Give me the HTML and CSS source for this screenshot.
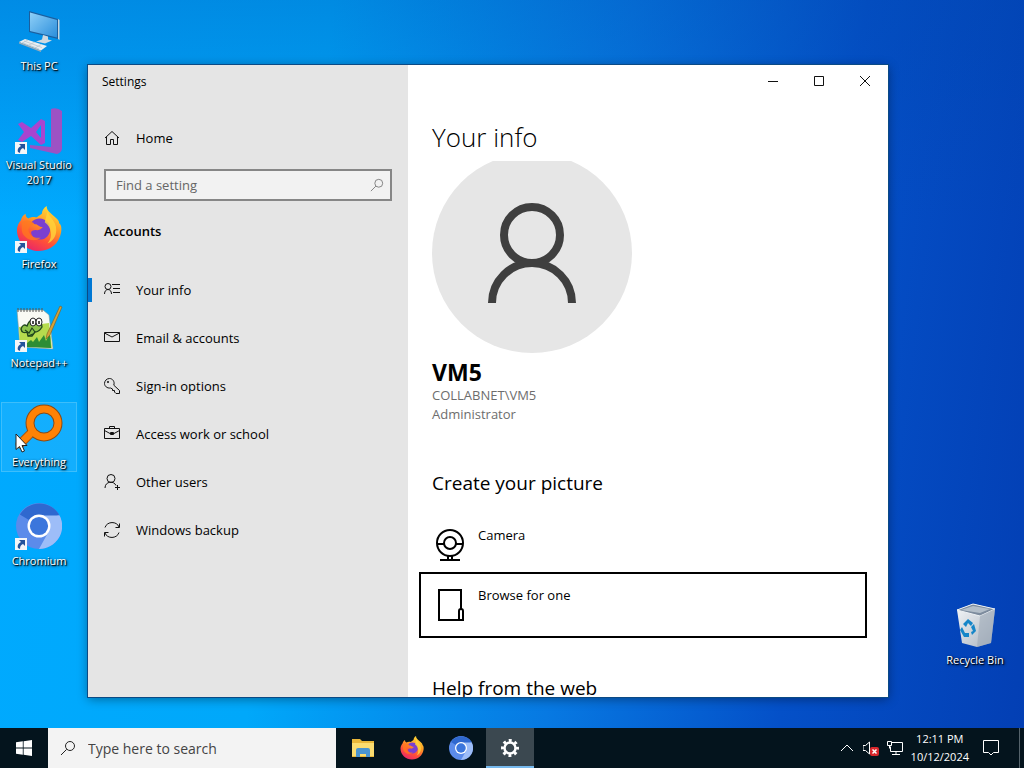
FILE: index.html
```html
<!DOCTYPE html>
<html lang="en">
<head>
	<meta charset="UTF-8" />
	<title>Settings</title>
	<link rel="stylesheet" href="styles.css">
</head>
<body>
	<!--shared shapes-->
	<svg class="defs" width="0" height="0">
		<defs>
			<linearGradient id="fox" x1="0.8" y1="0" x2="0.3" y2="1">
				<stop offset="0" stop-color="#ffe43a"/>
				<stop offset="0.4" stop-color="#ff9a25"/>
				<stop offset="0.7" stop-color="#ff5038"/>
				<stop offset="1" stop-color="#e8256a"/>
			</linearGradient>
			<linearGradient id="screen" x1="0" y1="0" x2="1" y2="1">
				<stop offset="0" stop-color="#8fd0f8"/>
				<stop offset="1" stop-color="#2b8edb"/>
			</linearGradient>
			<linearGradient id="bin" x1="0" y1="0" x2="1" y2="1">
				<stop offset="0" stop-color="#f4f6f8"/>
				<stop offset="1" stop-color="#a9b3bf"/>
			</linearGradient>
			<symbol id="shortcut" viewBox="0 0 12 12">
				<rect width="12" height="12" fill="#f4f6f8"/>
				<path d="M4 2h6v6L8 6C6 7 5 8 5 11L3 10C2 7 4 5 6 4z" fill="#24539b"/>
			</symbol>
			<symbol id="firefox" viewBox="0 0 48 48">
				<path d="M5 15C6 11 8 9 10 8c0 3 1 4 3 5 2-1 5-2 8-1 0 0 3-2 6-4 0-3 2-6 5-8 0 5 4 7 8 11 3 3 5 4 5 7 2 1 3 5 2 10-2 11-11 19-23 19S1 38 1 25c0-4 2-8 4-10z" fill="url(#fox)"/>
				<path d="M16 17c4-5 13-6 18 1 3 5 2 12-3 15-5 4-13 2-15-4-1-3 2-4 5-4 3 1 5-1 7-3-4 0-5-3-8-3-1 0-3-1-4-2z" fill="#7a3fd0"/>
				<path d="M33 5c1 7 9 10 9 20 0 7-4 12-9 14 6-7 4-17-3-22z" fill="#ffd43b" opacity="0.8"/>
				<path d="M6 17c4-3 8-3 13 1-2 3-6 3-6 7 1 7 8 9 13 8-8 6-19 1-20-8z" fill="#ff7a1f" opacity="0.75"/>
			</symbol>
			<symbol id="chromium" viewBox="0 0 48 48">
				<circle cx="24" cy="24" r="24" fill="#5b8bea"/>
				<path d="M24 24L4 12A24 24 0 0 1 45 12z" fill="#2f68cf"/>
				<path d="M24 13h21.500A24 24 0 0 1 24 48L34 30z" fill="#9dbdf8"/>
				<circle cx="24" cy="24" r="12" fill="#fff"/>
				<circle cx="24" cy="24" r="9.500" fill="#3b76dc"/>
			</symbol>
			<symbol id="search" viewBox="0 0 16 16">
				<circle cx="10" cy="6" r="4.500" fill="none" stroke="currentColor"/>
				<path d="M6.700 9.300L1 15" fill="none" stroke="currentColor"/>
			</symbol>
		</defs>
	</svg>

	<main class="desktop">
		<ul class="shortcuts">
			<li class="shortcut">
				<svg viewBox="0 0 48 48">
					<path d="M14 3l29 8v20l-29-7z" fill="#1b5f9e"/>
					<path d="M15 4.500l27 7.500v17.500L15 23z" fill="url(#screen)"/>
					<path d="M43 11l1.500 1v20L43 31z" fill="#c5d6e0"/>
					<path d="M28 27l5 1.500v3l4 1-7 3-9-2 6-2z" fill="#cfd9e0"/>
					<path d="M4 34l6-3 22 7-6 4.500z" fill="#e9eef1"/>
					<path d="M4 34l22 8.500v1.500L4 35.500z" fill="#9aabb7"/>
					<path d="M9 33l18 6.500M7 34.500L24 41M13 32l-5 2.500M20 34l-6 3M26 36.500L20 40" stroke="#b5c2cb" stroke-width="0.700"/>
				</svg>
				<span>This PC</span>
			</li>
			<li class="shortcut">
				<svg viewBox="0 0 48 48">
					<path d="M36 2q6-2 11 2v38q-1 4-5 5L15 41v-3l21 2z" fill="#9c52c4"/>
					<path d="M3 17l4-2 9 6 10-9 4 2v22l-4 2-10-9-9 6-4-2 6-8zM26 18l-5 7 5 6z" fill="#a845cf" fill-rule="evenodd"/>
					<use href="#shortcut" x="0" y="35" width="12" height="12"/>
				</svg>
				<span>Visual Studio 2017</span>
			</li>
			<li class="shortcut">
				<svg viewBox="0 0 48 48">
					<use href="#firefox" x="1" y="0" width="46" height="46"/>
					<use href="#shortcut" x="0" y="35" width="12" height="12"/>
				</svg>
				<span>Firefox</span>
			</li>
			<li class="shortcut">
				<svg viewBox="0 0 48 48">
					<path d="M2 5h26l6 5 4 34-33-2z" fill="#f9faf4" stroke="#8a9a90" stroke-width="0.600"/>
					<path d="M3 3v4M6 3v4M9 3v4M12 3v4M15 3v4M18 3v4M21 3v4M24 3v4M27 3v4" stroke="#555" stroke-width="1"/>
					<path d="M4 22l30-4 3 25-32-2z" fill="#b6dc4e"/>
					<path d="M12 38l4-3 2 2 4-5 2 5 5-7 2 6 4-8 1 15-25-1z" fill="#2d8d35"/>
					<path d="M6 24q2-6 6-3 3-9 9-4 6-1 6 5-3 5-7 5l-3 4h-4l-1-4q-5 2-6-3z" fill="#8bc34a" stroke="#20451d" stroke-width="1.300"/>
					<path d="M10 25l4 3 3-5 3 4M13 31l5-2" fill="none" stroke="#20451d" stroke-width="1.200"/>
					<ellipse cx="18" cy="17" rx="3" ry="4" fill="#fff" stroke="#222"/>
					<ellipse cx="24" cy="17" rx="3" ry="4" fill="#fff" stroke="#222"/>
					<path d="M18 16v3M24 16v3" stroke="#111" stroke-width="1.500"/>
					<path d="M45 1l2 1-12 28-4 4 1-5z" fill="#d3a23a" stroke="#7a5b20" stroke-width="0.600"/>
					<use href="#shortcut" x="0" y="35" width="12" height="12"/>
				</svg>
				<span>Notepad++</span>
			</li>
			<li class="shortcut selected">
				<svg viewBox="0 0 48 48">
					<path d="M16 29L5 40" stroke="#a95611" stroke-width="9" stroke-linecap="round"/>
					<circle cx="29" cy="19" r="14" fill="none" stroke="#8a4b16" stroke-width="9"/>
					<path d="M17 28L5 40" stroke="#ff8205" stroke-width="7" stroke-linecap="round"/>
					<circle cx="29" cy="19" r="14" fill="none" stroke="#ff8205" stroke-width="7"/>
				</svg>
				<span>Everything</span>
			</li>
			<li class="shortcut">
				<svg viewBox="0 0 48 48">
					<use href="#chromium" x="1" y="0" width="46" height="46"/>
					<use href="#shortcut" x="0" y="35" width="12" height="12"/>
				</svg>
				<span>Chromium</span>
			</li>
		</ul>

		<div class="shortcut recycle">
			<svg viewBox="0 0 48 48">
				<path d="M6 8l16-6 22 5-4 34-14 4-15-4z" fill="url(#bin)"/>
				<path d="M6 8l16-6 22 5-15 7z" fill="#7d8c9e" stroke="#eef2f5"/>
				<path d="M10 8l12-4 17 3-10 4z" fill="#b3bec9"/>
				<path d="M29 14l15-7-4 34-14 4z" fill="#99a6b5" opacity="0.550"/>
				<path d="M12 22l5-5 5 4-2 3-3-3-2 4zM23 22l2 7-4 4-1-3 2-1-2-4zM11 25l3 6h4v4h-5l-4-7z" fill="#1686c8"/>
			</svg>
			<span>Recycle Bin</span>
		</div>

		<section class="window">
			<aside class="sidebar">
				<div class="window-title">Settings</div>
				<a class="nav-item home" href="#home">
					<svg viewBox="0 0 16 16"><path d="M1 8l7-6.500L15 8M2.500 7v7.500h4v-5h3v5h4V7"/></svg>
					Home
				</a>
				<div class="find">
					<input type="text" placeholder="Find a setting" aria-label="Find a setting">
					<svg><use href="#search"/></svg>
				</div>
				<h2 class="group">Accounts</h2>
				<nav>
					<a class="nav-item current" href="#info">
						<svg viewBox="0 0 16 16"><circle cx="4" cy="4.500" r="3"/><path d="M.500 12c0-6 7-6 7 0M8 2.500h8M9 6.500h7M9 10.500h7"/></svg>
						Your info
					</a>
					<a class="nav-item" href="#email">
						<svg viewBox="0 0 16 16"><path d="M.500 2.500h15v9H.500zM.500 3L8 7l7.500-4"/></svg>
						Email &amp; accounts
					</a>
					<a class="nav-item" href="#signin">
						<svg viewBox="0 0 16 16"><path d="M9.800 7.200C11 3.500 8.500.500 5.500.500S.500 3 .500 5.500s2.500 5 6 4.500l2 1v1.500h2V14l1.500 1.500h3.500v-3z"/><circle cx="4" cy="4" r=".700"/></svg>
						Sign-in options
					</a>
					<a class="nav-item" href="#work">
						<svg viewBox="0 0 16 16"><path d="M.500 2.500h15v10H.500zM5.500 2.500v-2h5v2M.500 4.500L6 7.500h4l5.500-3M6.500 6.500h3v2h-3z"/></svg>
						Access work or school
					</a>
					<a class="nav-item" href="#users">
						<svg viewBox="0 0 16 16"><circle cx="7" cy="4.500" r="4"/><path d="M1 14c0-7 9-7.500 11-2.500M13.500 11v5M11 13.500h5"/></svg>
						Other users
					</a>
					<a class="nav-item" href="#backup">
						<svg viewBox="0 0 16 16"><path d="M1 5.500C3-1 13-1 15 5M15.500 1.500V5.500h-4M15 10.500C13 17 3 17 1 11M.500 14.500v-4h4"/></svg>
						Windows backup
					</a>
				</nav>
			</aside>

			<div class="content">
				<div class="controls">
					<button aria-label="Minimize"><svg viewBox="0 0 12 12"><path d="M1 6.500h10"/></svg></button>
					<button aria-label="Maximize"><svg viewBox="0 0 12 12"><path d="M1.500 1.500h9v9h-9z"/></svg></button>
					<button aria-label="Close"><svg viewBox="0 0 12 12"><path d="M1 1l10 10M11 1L1 11"/></svg></button>
				</div>
				<h1>Your info</h1>
				<div class="scroll">
					<svg class="avatar" viewBox="0 0 200 200">
						<circle cx="100" cy="100" r="100" fill="#e6e6e6"/>
						<circle cx="100" cy="82" r="28" fill="none" stroke="#3f3f3f" stroke-width="8"/>
						<path d="M60 150a40 40 0 0 1 80 0" fill="none" stroke="#3f3f3f" stroke-width="8"/>
					</svg>
					<div class="user">VM5</div>
					<div class="detail">COLLABNET\VM5</div>
					<div class="detail">Administrator</div>

					<h2>Create your picture</h2>
					<button class="source">
						<svg viewBox="0 0 32 34"><circle cx="16" cy="16" r="13"/><circle cx="16" cy="16" r="6"/><path d="M3 17h7M22 17h7M14 29v4M18 29v4M6 33h20"/></svg>
						<span>Camera</span>
					</button>
					<button class="source focused">
						<svg viewBox="0 0 32 34"><path d="M24 33H5V3h22v19"/><path d="M25 33v-9q0-2 2-2t2 2v9z"/></svg>
						<span>Browse for one</span>
					</button>
					<h2 class="help">Help from the web</h2>
				</div>
			</div>
		</section>

		<!--mouse pointer-->
		<svg class="pointer" viewBox="0 0 13 20"><path d="M1 1v15.500l3.500-3 2.500 5.500 2.500-1-2.500-5.500h5z" fill="#fff" stroke="#222"/></svg>
	</main>

	<footer class="taskbar">
		<button class="start" aria-label="Start">
			<svg viewBox="0 0 16 16"><path d="M0 2.300l6.800-1v6.300H0zM7.600 1.200L16 0v7.600H7.600zM0 8.400h6.800v6.300L0 13.700zM7.600 8.400H16V16l-8.400-1.200z" fill="#fff"/></svg>
		</button>
		<label class="task-search">
			<svg><use href="#search"/></svg>
			<input type="text" placeholder="Type here to search" aria-label="Search">
		</label>
		<div class="apps">
			<button aria-label="File Explorer">
				<svg viewBox="0 0 24 24"><path d="M1 3h8l2 2h12v16H1z" fill="#e9b73a"/><path d="M1 7h22v13H1z" fill="#fbdc70"/><path d="M5 21v-7q0-2 2-2h10q2 0 2 2v7h-4v-3H9v3z" fill="#4a94d0"/></svg>
			</button>
			<button aria-label="Firefox"><svg><use href="#firefox"/></svg></button>
			<button aria-label="Chromium"><svg><use href="#chromium"/></svg></button>
			<button class="active" aria-label="Settings">
				<svg viewBox="0 0 24 24" fill="none" stroke="#fff">
					<circle cx="12" cy="13" r="5.500" stroke-width="2.500"/>
					<circle cx="12" cy="13" r="7.500" stroke-width="3" stroke-dasharray="2.900 2.990" stroke-dashoffset="1.450"/>
				</svg>
			</button>
		</div>
		<div class="tray">
			<svg viewBox="0 0 16 16"><path d="M2 11l6-6 6 6"/></svg>
			<svg viewBox="0 0 16 16"><path d="M0 5.500h2.500L6.500 2v12L2.500 10.500H0z"/><rect x="7" y="7" width="9" height="9" rx="2" fill="#d8262b" stroke="none"/><path d="M9.500 9.500l4 4M13.500 9.500l-4 4" stroke-width="1.500"/></svg>
			<svg viewBox="0 0 16 16"><path d="M4.500 2.500h11v9h-12v-5M5 14.500h8M9 11.500v3M.500 1.500h4v4h-4zM2.500 5.500v3"/></svg>
			<div class="clock">12:11 PM<br>10/12/2024</div>
			<svg class="notice" viewBox="0 0 18 18"><path d="M1.500 1.500h15v12h-5L9 16l-2.500-2.500h-5z"/></svg>
		</div>
	</footer>
</body>
</html>
```
FILE: styles.css
```css
* {
	box-sizing: border-box;
}
body {
	margin: 0;
	height: 100vh;
	display: flex;
	flex-direction: column;
	overflow: hidden;
	font-family: "Open Sans", "Noto Sans", sans-serif;
	font-size: 13px;
	color: #000;
}
button, input {
	font: inherit;
	color: inherit;
	border: 0;
	background: none;
	padding: 0;
}
h1, h2 {
	margin: 0;
	font-weight: 400;
}
.defs {
	position: absolute;
}

/*desktop*/
.desktop {
	position: relative;
	flex: 1;
	min-height: 0;
	background:
		linear-gradient(180deg, rgba(0,70,170,0.3), rgba(0,70,170,0) 30%),
		linear-gradient(97deg, #00aaff 0%, #00a8fa 30%, #0779e2 57%, #0450c8 78%, #033fb4 100%);
}
.shortcuts {
	list-style: none;
	margin: 0;
	padding: 6px 0 0 1px;
	width: 77px;
	display: grid;
	grid-auto-rows: 99px;
	align-items: start;
}
.shortcut {
	display: flex;
	flex-direction: column;
	align-items: center;
	height: 70px;
	padding-top: 2px;
	font-size: 11px;
	line-height: 15px;
	text-align: center;
	color: #fff;
	text-shadow: 1px 1px 1px #000, 1px 1px 3px #000;
}
.shortcut svg {
	flex: none;
	width: 48px;
	height: 48px;
	margin-bottom: 2px;
}
.selected {
	border: 1px solid #3dbefb;
	background: rgba(120,205,255,0.16);
	padding-top: 1px;
}
.recycle {
	position: absolute;
	right: 11px;
	bottom: 58px;
	width: 76px;
}
.pointer {
	position: absolute;
	left: 15px;
	top: 433px;
	width: 13px;
	height: 20px;
}

/*settings window*/
.window {
	position: absolute;
	top: 65px;
	right: 136px;
	bottom: 31px;
	left: 88px;
	display: flex;
	overflow: hidden;
	background: #fff;
	box-shadow: 0 0 0 1px #0b4a85, 0 2px 10px rgba(0,0,0,0.4);
}
.sidebar {
	width: 320px;
	flex: none;
	background: #e5e5e5;
}
.window-title {
	height: 32px;
	padding-left: 14px;
	font-size: 12px;
	line-height: 34px;
}
.nav-item {
	display: flex;
	align-items: center;
	gap: 16px;
	height: 48px;
	padding-left: 16px;
	color: inherit;
	text-decoration: none;
}
.nav-item svg {
	width: 16px;
	height: 16px;
	fill: none;
	stroke: #111;
}
.home {
	margin-top: 17px;
}
.current {
	background: linear-gradient(#0078d4, #0078d4) left / 4px 24px no-repeat;
}
.find {
	display: flex;
	align-items: center;
	height: 32px;
	margin: 7px 16px 0;
	padding: 0 6px 0 10px;
	border: 2px solid #868686;
	background: #f2f2f2;
}
.find input {
	flex: 1;
	min-width: 0;
}
.find svg {
	width: 14px;
	height: 14px;
	color: #777;
}
input::placeholder {
	color: #666;
	opacity: 1;
}
.group {
	margin: 20px 0 25px;
	padding-left: 16px;
	font-size: 13px;
	line-height: 20px;
	font-weight: 600;
}
.content {
	flex: 1;
	min-width: 0;
	display: flex;
	flex-direction: column;
}
.controls {
	display: flex;
	justify-content: flex-end;
}
.controls button {
	width: 46px;
	height: 32px;
}
.controls svg {
	display: block;
	margin: auto;
	width: 12px;
	height: 12px;
	fill: none;
	stroke: #111;
}
h1 {
	margin: 20px 0 4px;
	padding-left: 24px;
	font-size: 26px;
	line-height: 40px;
	font-weight: 300;
}
.scroll {
	flex: 1;
	min-height: 0;
	overflow: hidden;
	padding: 0 24px;
}
.avatar {
	display: block;
	width: 200px;
	height: 200px;
	margin-top: -8px;
}
.user {
	margin-top: 5px;
	font-size: 23px;
	line-height: 28px;
	font-weight: 700;
}
.detail {
	line-height: 19px;
	color: #6d6d6d;
}
.scroll h2 {
	margin: 45px 0 18px;
	font-size: 19px;
	line-height: 28px;
}
.source {
	display: flex;
	align-items: flex-start;
	gap: 12px;
	width: calc(100% + 10px);
	max-width: 442px;
	height: 60px;
	margin-left: -10px;
	padding: 12px;
}
.source svg {
	width: 32px;
	height: 34px;
	fill: none;
	stroke: #000;
	stroke-width: 2;
}
.source span {
	line-height: 16px;
}
.focused {
	outline: 2px solid #000;
	outline-offset: 1px;
}
.scroll .help {
	margin-top: 39px;
}

/*taskbar*/
.taskbar {
	display: flex;
	height: 40px;
	background: #04141d;
	color: #fff;
}
.start {
	width: 48px;
}
.start svg {
	display: block;
	margin: auto;
	width: 16px;
	height: 16px;
}
.task-search {
	display: flex;
	align-items: center;
	gap: 12px;
	width: 288px;
	padding-left: 12px;
	background: #f3f3f3;
	color: #222;
	font-size: 14px;
}
.task-search svg {
	width: 16px;
	height: 16px;
}
.task-search input {
	flex: 1;
	min-width: 0;
}
.task-search input::placeholder {
	color: #444;
}
.apps {
	display: flex;
	gap: 1px;
	padding-left: 3px;
}
.apps button {
	width: 48px;
}
.apps svg {
	display: block;
	margin: auto;
	width: 24px;
	height: 24px;
}
.apps .active {
	background: #3b4850;
	border-bottom: 2px solid #76b9ed;
}
.tray {
	display: flex;
	align-items: center;
	gap: 8px;
	margin-left: auto;
	margin-right: 4px;
	padding-right: 19px;
	border-right: 1px solid #55636b;
}
.tray svg {
	width: 16px;
	height: 16px;
	fill: none;
	stroke: #fff;
}
.tray .notice {
	width: 18px;
	height: 18px;
	margin-left: 5px;
}
.clock {
	font-size: 11px;
	line-height: 18px;
	text-align: center;
}
```
